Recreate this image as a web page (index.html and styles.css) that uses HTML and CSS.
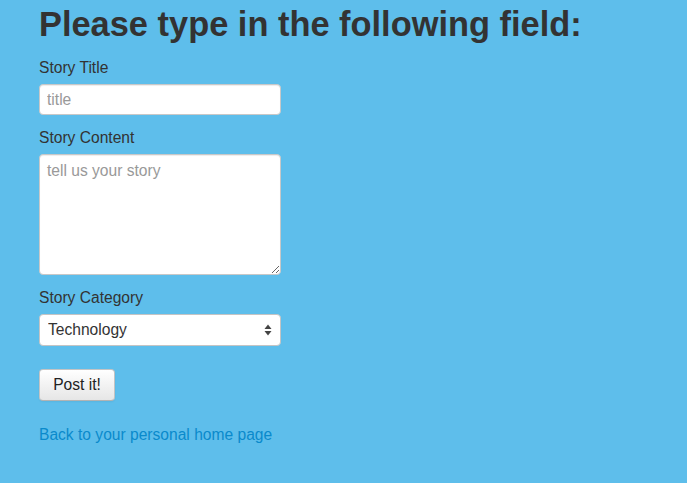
FILE: index.html
```html
<!DOCTYPE html>
<html lang="en">
<head>
<meta charset="utf-8">
<title>Post a story</title>
<link rel="stylesheet" href="styles.css">
</head>
<body>
<main class="page">
  <h1 class="title">Please type in the following field:</h1>
  <form class="story-form" action="#" onsubmit="return false;">
    <div class="form-group">
      <label class="field-label" for="title">Story Title</label>
      <input class="field" id="title" type="text" placeholder="title">
    </div>
    <div class="form-group">
      <label class="field-label" for="content">Story Content</label>
      <textarea class="field field-area" id="content" placeholder="tell us your story"></textarea>
    </div>
    <div class="form-group">
      <label class="field-label" for="category">Story Category</label>
      <div class="select-wrap">
        <select class="field field-select" id="category">
          <option>Technology</option>
          <option>Life</option>
          <option>Travel</option>
        </select>
        <svg class="select-arrows" width="8" height="12" viewBox="0 0 8 12" aria-hidden="true">
          <path d="M4 0.5 L7.5 5 H0.5 Z" fill="#444"/>
          <path d="M4 11.5 L7.5 7 H0.5 Z" fill="#444"/>
        </svg>
      </div>
    </div>
    <button class="btn" type="submit">Post it!</button>
  </form>
  <a class="back-link" href="#">Back to your personal home page</a>
</main>
</body>
</html>
```
FILE: styles.css
```css
html, body {
  margin: 0;
  padding: 0;
  background: #5ebeeb;
}
body {
  font-family: "Liberation Sans", Arial, sans-serif;
  font-size: 15.6px;
  color: #333;
  min-height: 483px;
}
.page {
  padding: 4px 0 0 39px;
}
.title {
  margin: 0 0 14px 0;
  font-size: 34.4px;
  line-height: 40px;
  font-weight: bold;
  color: #333;
}
.story-form {
  display: flex;
  flex-direction: column;
  align-items: flex-start;
}
.form-group {
  display: flex;
  flex-direction: column;
  margin-bottom: 13px;
}
.field-label {
  display: block;
  font-size: 15.6px;
  line-height: 20px;
  margin-bottom: 6px;
  color: #333;
}
.field {
  box-sizing: border-box;
  width: 242px;
  height: 31px;
  margin: 0;
  padding: 4px 7px;
  font-family: "Liberation Sans", Arial, sans-serif;
  font-size: 15.6px;
  line-height: 20px;
  color: #333;
  background: #fff;
  border: 1px solid #c8c8c8;
  border-radius: 4px;
  box-shadow: inset 0 1px 1px rgba(0,0,0,0.075);
  outline: none;
}
.field::placeholder {
  color: #999;
}
.field-area {
  height: 121px;
  padding: 6px 7px;
  resize: vertical;
}
.select-wrap {
  position: relative;
  width: 242px;
}
.field-select {
  -webkit-appearance: none;
  appearance: none;
  height: 32px;
  padding: 4px 24px 4px 8px;
  box-shadow: none;
  border-color: #c4c4c4;
}
.select-arrows {
  position: absolute;
  right: 9px;
  top: 10px;
  pointer-events: none;
}
.btn {
  margin-top: 10px;
  box-sizing: border-box;
  width: 76px;
  height: 32px;
  padding: 0;
  font-family: "Liberation Sans", Arial, sans-serif;
  font-size: 15.6px;
  color: #222;
  background: linear-gradient(#ffffff, #e6e6e6);
  border: 1px solid #c4c4c4;
  border-bottom-color: #b3b3b3;
  border-radius: 4px;
  box-shadow: 0 1px 2px rgba(0,0,0,0.05);
  cursor: pointer;
}
.back-link {
  display: inline-block;
  margin-top: 24px;
  font-size: 15.6px;
  line-height: 20px;
  color: #0a8acb;
  text-decoration: none;
}
```
